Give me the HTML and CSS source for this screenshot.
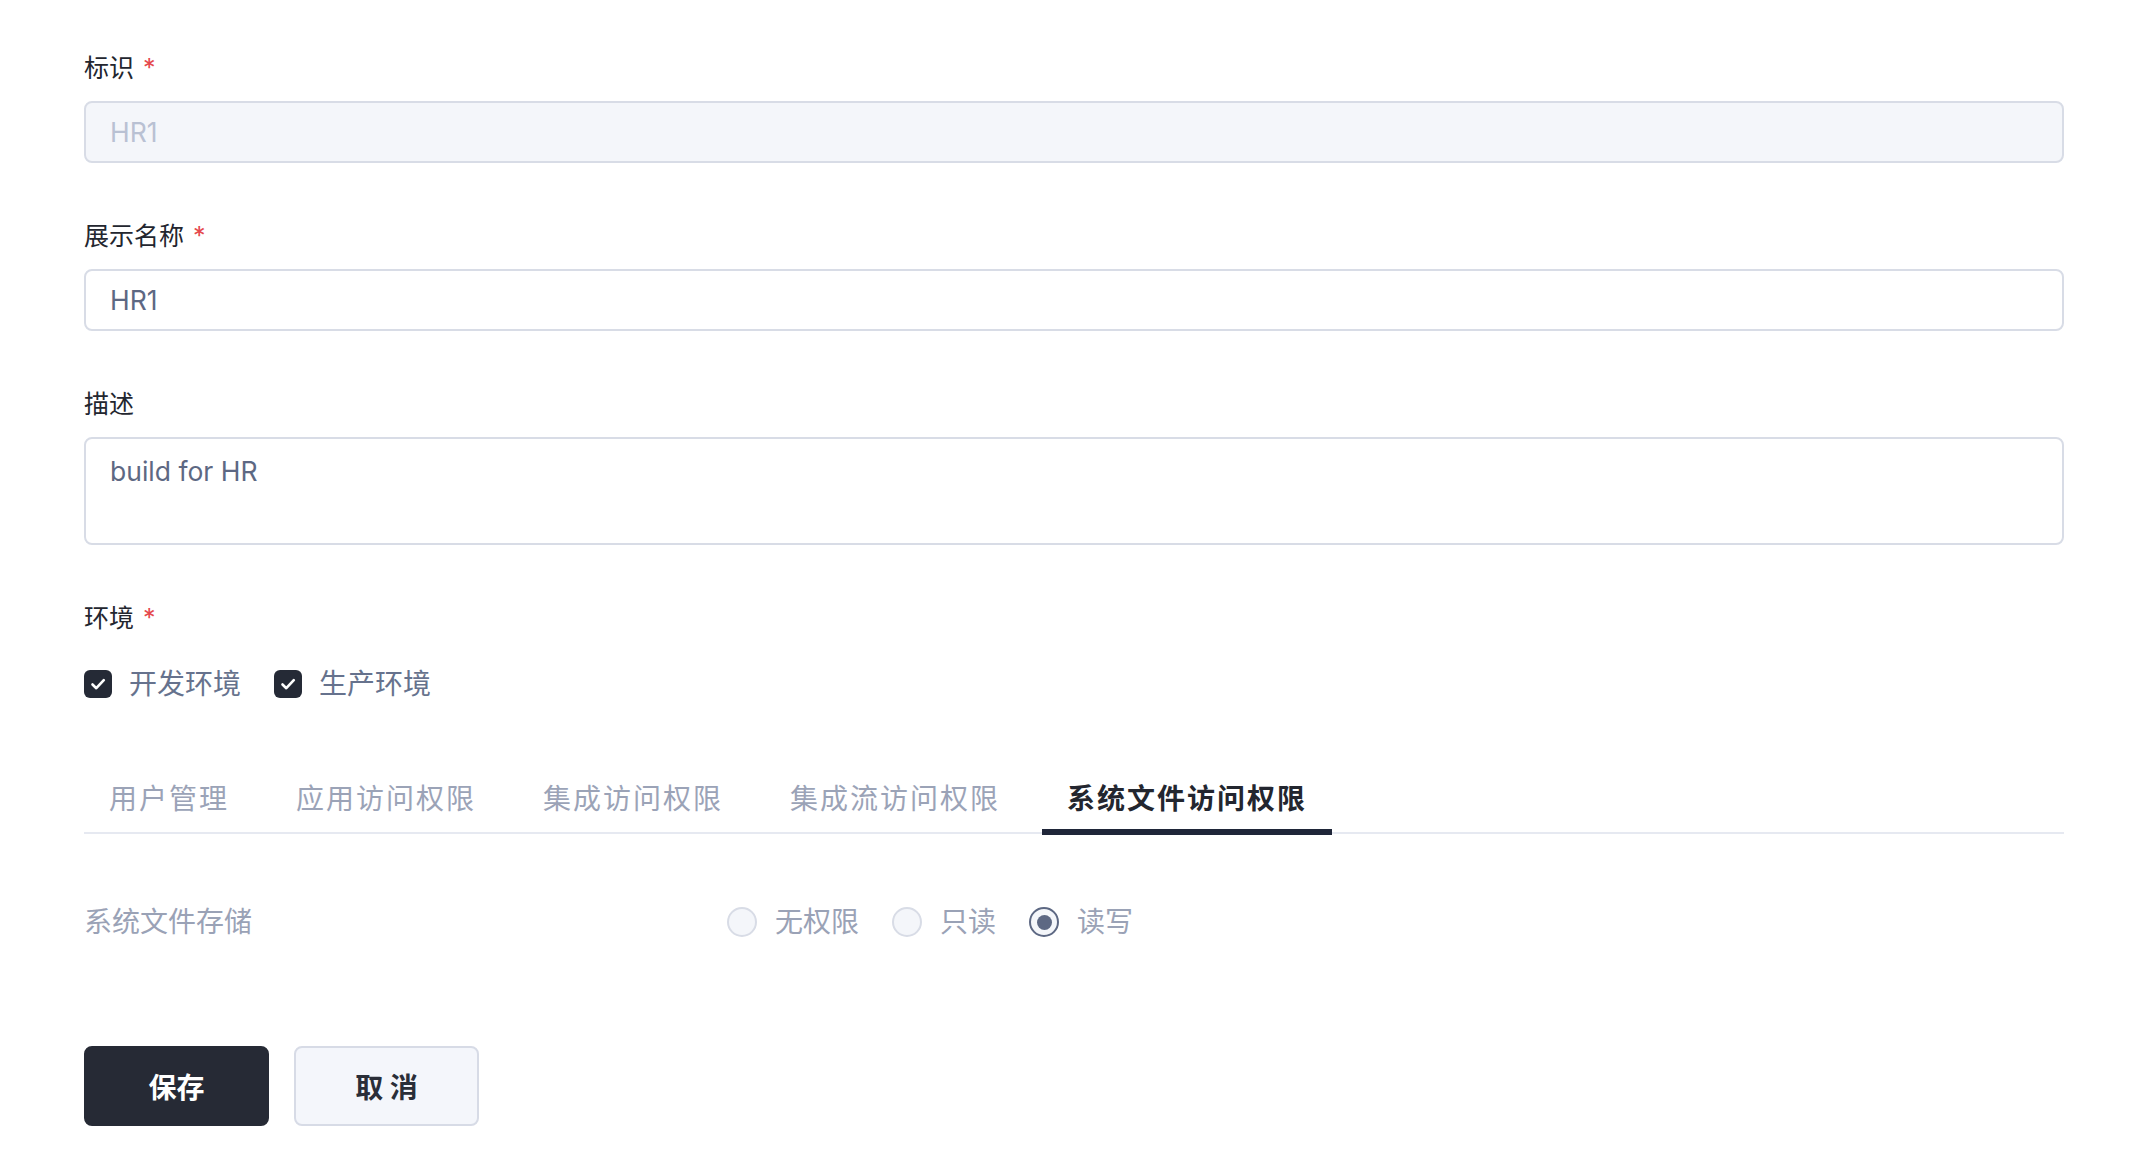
FILE: index.html
```html
<!DOCTYPE html>
<html lang="zh-CN">
<head>
<meta charset="utf-8">
<title>编辑</title>
<link rel="stylesheet" href="styles.css">
</head>
<body>
<div class="page">
  <div class="form-item">
    <div class="label">标识<span class="req">*</span></div>
    <div class="control">
      <input class="input disabled" type="text" value="HR1" readonly>
    </div>
  </div>
  <div class="form-item">
    <div class="label">展示名称<span class="req">*</span></div>
    <div class="control">
      <input class="input" type="text" value="HR1">
    </div>
  </div>
  <div class="form-item">
    <div class="label">描述</div>
    <div class="control">
      <textarea class="input textarea">build for HR</textarea>
    </div>
  </div>
  <div class="form-item env">
    <div class="label">环境<span class="req">*</span></div>
    <div class="checks">
      <label class="check">
        <span class="box"><svg viewBox="0 0 28 28" width="28" height="28"><path d="M8.5 14.5 L12.3 18.2 L19.8 10.2" fill="none" stroke="#fff" stroke-width="2.6" stroke-linecap="round" stroke-linejoin="round"/></svg></span>
        <span class="check-text">开发环境</span>
      </label>
      <label class="check">
        <span class="box"><svg viewBox="0 0 28 28" width="28" height="28"><path d="M8.5 14.5 L12.3 18.2 L19.8 10.2" fill="none" stroke="#fff" stroke-width="2.6" stroke-linecap="round" stroke-linejoin="round"/></svg></span>
        <span class="check-text">生产环境</span>
      </label>
    </div>
  </div>

  <div class="tabs">
    <div class="tab">用户管理</div>
    <div class="tab">应用访问权限</div>
    <div class="tab">集成访问权限</div>
    <div class="tab">集成流访问权限</div>
    <div class="tab active">系统文件访问权限</div>
  </div>

  <div class="perm-row">
    <div class="perm-label">系统文件存储</div>
    <div class="radios">
      <label class="radio"><span class="dot"></span><span class="radio-text">无权限</span></label>
      <label class="radio"><span class="dot"></span><span class="radio-text">只读</span></label>
      <label class="radio checked"><span class="dot"></span><span class="radio-text">读写</span></label>
    </div>
  </div>

  <div class="actions">
    <button class="btn primary">保存</button>
    <button class="btn">取 消</button>
  </div>
</div>
</body>
</html>
```

FILE: styles.css
```css
* {
  box-sizing: border-box;
  margin: 0;
  padding: 0;
}

html, body {
  background: #ffffff;
}

body {
  font-family: "Inter", "Noto Sans CJK SC", sans-serif;
  color: #23262f;
}

.page {
  padding: 51px 86px 0 84px;
}

.form-item {
  margin-bottom: 56px;
}

.label {
  display: flex;
  font-size: 25px;
  line-height: 34px;
  color: #23262f;
}

.req {
  color: #e5484d;
  margin-left: 9px;
}

.control {
  margin-top: 16px;
}

.input {
  display: block;
  width: 100%;
  height: 62px;
  border: 2px solid #d8dce6;
  border-radius: 8px;
  padding: 0 24px;
  font-family: inherit;
  font-size: 26.5px;
  color: #5d6883;
  background: #ffffff;
  outline: none;
}

.input.disabled {
  background: #f4f6fa;
  color: #b9c1d3;
}

.textarea {
  height: 108px;
  padding: 12px 24px;
  line-height: 40px;
  resize: none;
}

.env {
  margin-bottom: 55px;
}

.checks {
  margin-top: 29px;
  display: flex;
  gap: 33px;
  height: 40px;
  align-items: center;
}

.check {
  display: flex;
  align-items: center;
  gap: 17px;
}

.box {
  width: 28px;
  height: 28px;
  border-radius: 6px;
  background: #252a36;
  display: flex;
}

.check-text {
  font-size: 28px;
  line-height: 40px;
  color: #66728d;
}

.tabs {
  display: flex;
  gap: 17px;
  border-bottom: 2px solid #e6e9f1;
}

.tab {
  padding: 20px 25px 10px;
  font-size: 28px;
  line-height: 40px;
  letter-spacing: 2px;
  color: #9ba3b7;
  margin-bottom: -3px;
  border-bottom: 6px solid transparent;
}

.tab.active {
  color: #23262f;
  font-weight: 700;
  border-bottom-color: #1f2639;
}

.perm-row {
  margin-top: 68px;
  display: flex;
  align-items: center;
  height: 40px;
}

.perm-label {
  flex: 0 0 643px;
  font-size: 28px;
  line-height: 40px;
  color: #9aa2b6;
}

.radios {
  display: flex;
  align-items: center;
  gap: 33px;
}

.radio {
  display: flex;
  align-items: center;
  gap: 18px;
}

.dot {
  width: 30px;
  height: 30px;
  border-radius: 50%;
  border: 2px solid #d8dce6;
  background: #f4f6fa;
  display: flex;
  align-items: center;
  justify-content: center;
}

.radio.checked .dot {
  border-color: #5d6883;
}

.radio.checked .dot::after {
  content: "";
  width: 15px;
  height: 15px;
  border-radius: 50%;
  background: #5d6883;
}

.radio-text {
  font-size: 28px;
  line-height: 40px;
  color: #9aa2b6;
}

.actions {
  margin-top: 104px;
  display: flex;
  gap: 25px;
}

.btn {
  width: 185px;
  height: 80px;
  border-radius: 8px;
  border: 2px solid #d7dbe6;
  background: #f4f6fb;
  color: #2a2e38;
  font-family: inherit;
  font-size: 28px;
  font-weight: 700;
  cursor: pointer;
}

.btn.primary {
  background: #262a35;
  border-color: #262a35;
  color: #ffffff;
}
```
